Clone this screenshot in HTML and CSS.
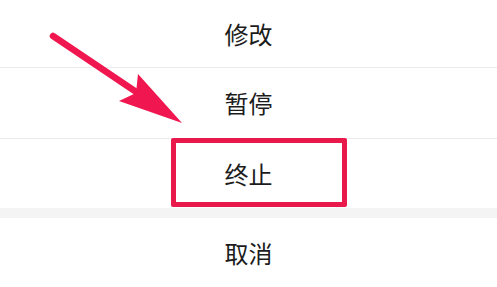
FILE: index.html
```html
<!DOCTYPE html>
<html lang="zh">
<head>
<meta charset="utf-8">
<link rel="stylesheet" href="styles.css">
</head>
<body>
<div class="sheet">
  <div class="group">
    <div class="item item-first">修改</div>
    <div class="item item-mid">暂停</div>
    <div class="item item-last">终止</div>
  </div>
  <div class="gap"></div>
  <div class="item item-cancel">取消</div>

  <div class="highlight"></div>
  <svg class="arrow" width="497" height="287" viewBox="0 0 497 287">
    <line x1="53" y1="36" x2="137" y2="92.5" stroke="#f0164f" stroke-width="6.5" stroke-linecap="round"/>
    <polygon points="138,74 182,123 119,101 136,93" fill="#f0164f"/>
  </svg>
</div>
</body>
</html>
```
FILE: styles.css
```css
html, body {
  margin: 0;
  padding: 0;
  background: #ffffff;
}
.sheet {
  position: relative;
  width: 497px;
  height: 287px;
  overflow: hidden;
  font-family: "Noto Sans CJK SC", "Noto Sans", sans-serif;
  color: #1c1c1c;
}
.group {
  display: flex;
  flex-direction: column;
}
.item {
  display: flex;
  align-items: center;
  justify-content: center;
  font-size: 24px;
  line-height: 1;
  background: #ffffff;
}
.item-first {
  height: 67px;
  border-bottom: 1px solid #ebebeb;
}
.item-mid {
  height: 70px;
  border-bottom: 1px solid #ebebeb;
}
.item-last {
  height: 69px;
}
.gap {
  height: 10px;
  background: #f4f4f4;
}
.item-cancel {
  height: 69px;
}
.highlight {
  position: absolute;
  left: 171px;
  top: 138px;
  width: 166px;
  height: 59px;
  border: 5px solid #e91a4b;
  border-radius: 2px;
}
.arrow {
  position: absolute;
  left: 0;
  top: 0;
}
```
